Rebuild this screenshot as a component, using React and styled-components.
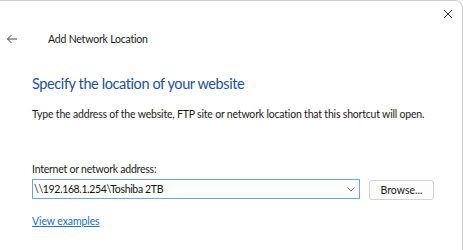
import React from "react";
import styled, { createGlobalStyle } from "styled-components";

const Global = createGlobalStyle`
  html, body { margin: 0; padding: 0; background: #ffffff; }
  body { font-family: Lato, "Noto Sans", sans-serif; color: #1a1a1a; }
  * { box-sizing: border-box; }
`;

const Window = styled.div`
  width: 463px;
  height: 250px;
  background: #ffffff;
  border-top: 1px solid #cfcfcf;
  border-right: 1px solid #cfcfcf;
  border-top-right-radius: 8px;
  display: flex;
  flex-direction: column;
  overflow: hidden;
`;

const TitleBar = styled.div`
  height: 25px;
  display: flex;
  justify-content: flex-end;
  align-items: center;
  padding-right: 2px;
`;

const IconButton = styled.button`
  width: 24px;
  height: 22px;
  border: none;
  background: transparent;
  padding: 0;
  display: flex;
  align-items: center;
  justify-content: center;
  color: #333;
  cursor: pointer;
`;

const NavRow = styled.div`
  height: 26px;
  display: flex;
  align-items: center;
`;

const BackButton = styled(IconButton)`
  width: 24px;
  margin-right: 24px;
`;

const NavTitle = styled.span`
  font-size: 10.5px;
  letter-spacing: -0.2px;
  color: #1a1a1a;
`;

const Content = styled.div`
  padding: 0 0 0 32px;
  display: flex;
  flex-direction: column;
`;

const Heading = styled.h1`
  margin: 22px 0 0 0;
  font-size: 14.5px;
  letter-spacing: -0.4px;
  font-weight: 400;
  color: #1f4f9e;
  line-height: 20px;
`;

const Body = styled.p`
  margin: 12px 0 0 0;
  font-size: 10.5px;
  letter-spacing: -0.19px;
  line-height: 16px;
  color: #1a1a1a;
  white-space: nowrap;
`;

const Label = styled.label`
  margin-top: 39px;
  font-size: 10.5px;
  letter-spacing: -0.23px;
  line-height: 16px;
  color: #1a1a1a;
`;

const FieldRow = styled.div`
  margin-top: 2px;
  display: flex;
  align-items: flex-start;
  gap: 9px;
`;

const Combo = styled.div`
  width: 328px;
  height: 20px;
  border: 1px solid #6fa6d6;
  display: flex;
  align-items: center;
  padding: 0 4px 0 1px;
  background: #fff;
`;

const ComboText = styled.span`
  flex: 1;
  font-size: 10.5px;
  letter-spacing: -0.35px;
  color: #111;
  white-space: nowrap;
`;

const Button = styled.button`
  margin-top: 1px;
  width: 65px;
  height: 20px;
  border: 1px solid #d4d4d4;
  border-radius: 3px;
  background: #fdfdfd;
  font-family: inherit;
  font-size: 10.5px;
  color: #1a1a1a;
  padding: 0;
`;

const Link = styled.a`
  margin-top: 13px;
  font-size: 10.5px;
  letter-spacing: -0.1px;
  line-height: 16px;
  color: #2a6fb8;
  text-decoration: underline;
  align-self: flex-start;
`;

export default function App() {
  return (
    <>
      <Global />
      <Window>
        <TitleBar>
          <IconButton aria-label="Close">
            <svg width="10" height="10" viewBox="0 0 10 10">
              <path d="M1 1L9 9M9 1L1 9" stroke="#333" strokeWidth="1" />
            </svg>
          </IconButton>
        </TitleBar>
        <NavRow>
          <BackButton aria-label="Back">
            <svg width="12" height="10" viewBox="0 0 12 10">
              <path d="M11 5H1.5M5.5 1L1.5 5L5.5 9" stroke="#444" strokeWidth="1" fill="none" />
            </svg>
          </BackButton>
          <NavTitle>Add Network Location</NavTitle>
        </NavRow>
        <Content>
          <Heading>Specify the location of your website</Heading>
          <Body>
            Type the address of the website, FTP site or network location that this shortcut will open.
          </Body>
          <Label>Internet or network address:</Label>
          <FieldRow>
            <Combo>
              <ComboText>\\192.168.1.254\Toshiba 2TB</ComboText>
              <svg width="8" height="5" viewBox="0 0 8 5">
                <path d="M0.5 0.5L4 4L7.5 0.5" stroke="#777" strokeWidth="1" fill="none" />
              </svg>
            </Combo>
            <Button>Browse...</Button>
          </FieldRow>
          <Link href="#">View examples</Link>
        </Content>
      </Window>
    </>
  );
}
